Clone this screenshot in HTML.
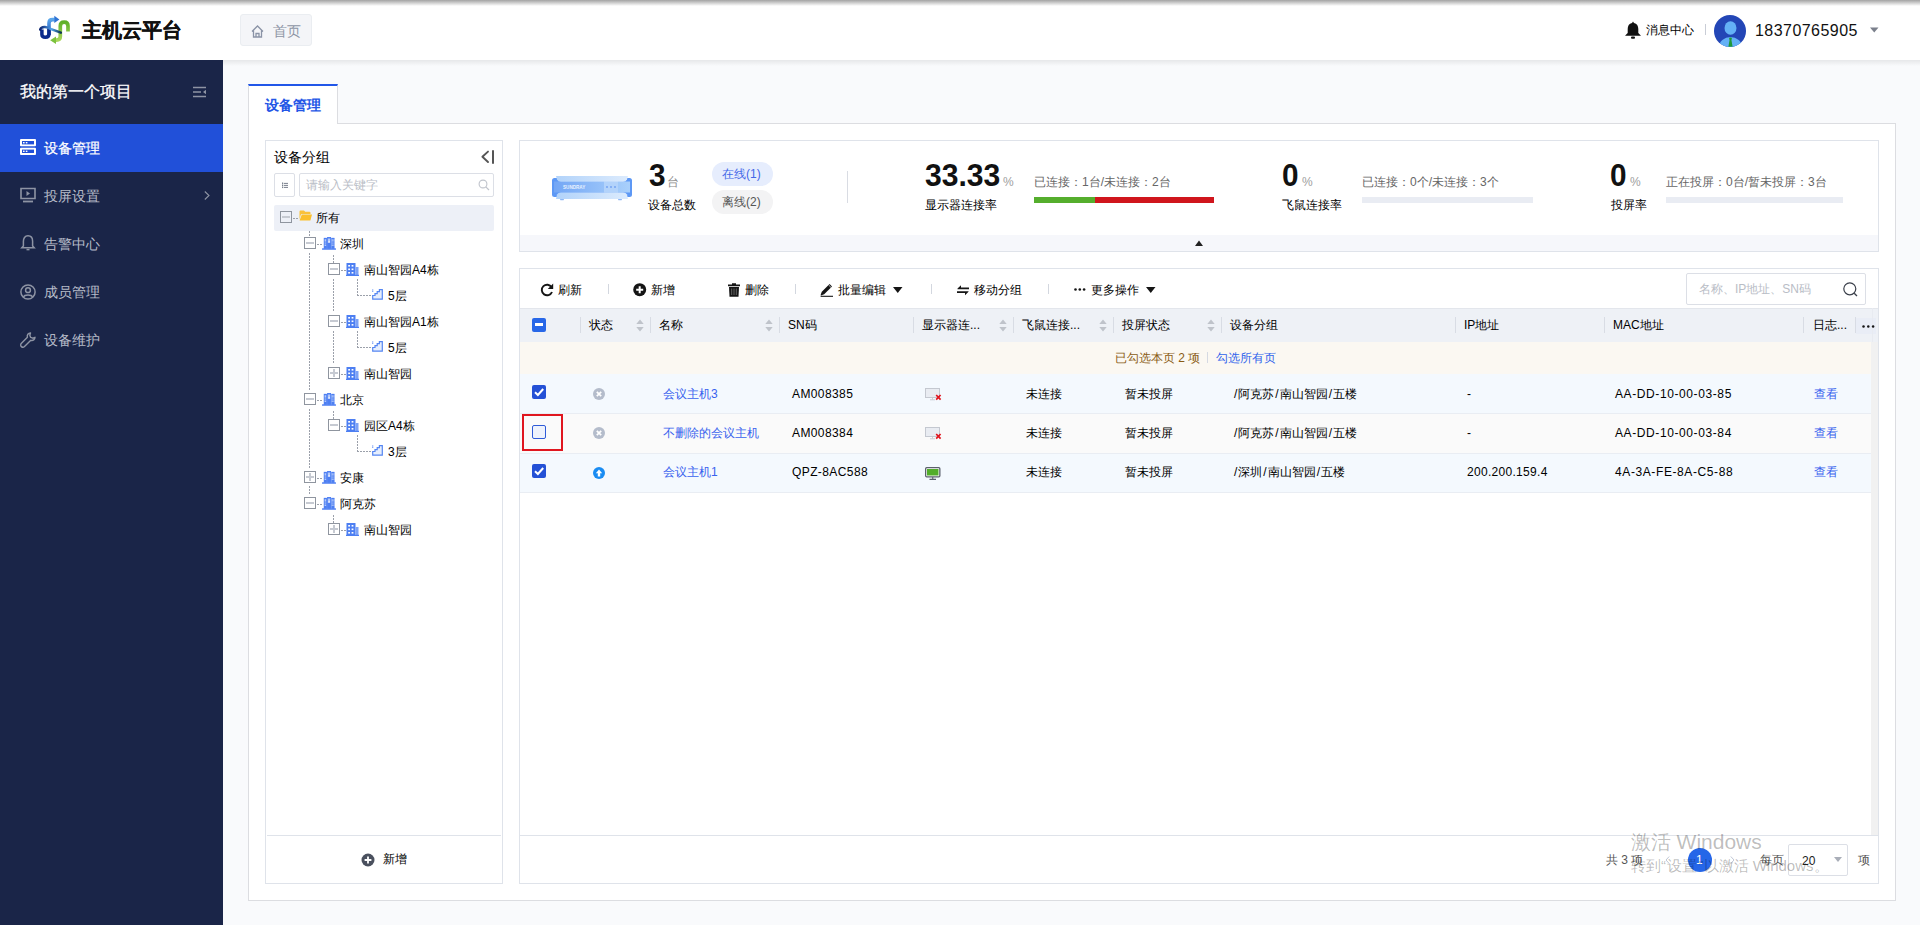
<!DOCTYPE html><html><head><meta charset="utf-8"><title>主机云平台</title><style>
*{margin:0;padding:0;box-sizing:border-box}
html,body{width:1920px;height:925px;overflow:hidden}
body{position:relative;background:#f9fafc;font-family:"Liberation Sans",sans-serif;color:#000}
.a{position:absolute}
.t{position:absolute;line-height:1;white-space:nowrap}
.f12{font-size:12px}.f14{font-size:14px}.f16{font-size:16px}
.g6{color:#666}
.lnk{color:#3d64e6}
svg{position:absolute;overflow:visible}
</style></head><body>
<div class="a" style="left:0px;top:0px;width:1920px;height:60px;background:#fff"></div>
<div class="a" style="left:0px;top:0px;width:1920px;height:6px;background:linear-gradient(#a3a3a3,rgba(255,255,255,0))"></div>
<div class="a" style="left:223px;top:60px;width:1697px;height:6px;background:linear-gradient(rgba(0,0,0,0.075),rgba(0,0,0,0))"></div>
<svg style="left:38px;top:14px" width="34" height="32" viewBox="0 0 34 32">
<defs><linearGradient id="lgb" x1="0" y1="1" x2="0" y2="0"><stop offset="0" stop-color="#1a4fb8"/><stop offset="1" stop-color="#5aa6ea"/></linearGradient>
<linearGradient id="lgg" x1="0" y1="0" x2="0" y2="1"><stop offset="0" stop-color="#5fb02a"/><stop offset="1" stop-color="#a9d65c"/></linearGradient>
<linearGradient id="lgd" x1="0" y1="0" x2="1" y2="0"><stop offset="0" stop-color="#0a2270"/><stop offset="0.55" stop-color="#4fa2ea"/><stop offset="1" stop-color="#0c3550"/></linearGradient></defs>
<path d="M30 17.6 V12 Q30 8.2 26.2 8.2 Q22.3 8.2 22.3 12 V22.5 Q22.3 26.1 18.5 26.1 H17.6" fill="none" stroke="url(#lgg)" stroke-width="3.7"/>
<path d="M18 22.4 L12.2 26.3 L18 30 Z" fill="#7cc23d"/>
<path d="M11 21 V9.2 Q11 5.6 14.6 5.6 H16.8" fill="none" stroke="url(#lgb)" stroke-width="3.6"/>
<path d="M16.3 1.8 L21.4 5.5 L16.3 9.1 Z" fill="#2f74d4"/>
<path d="M3.9 15.5 V20.5 Q3.9 23.2 7.4 23.2 Q11 23.2 11 20 V15" fill="none" stroke="#0c2b8c" stroke-width="3.5"/>
<path d="M2.2 15.6 Q3 12.8 7 13 Q10 13.2 12.5 15 L22.8 18.6" fill="none" stroke="url(#lgd)" stroke-width="2.5" stroke-linecap="round"/>
</svg>
<div class="t" style="left:82px;top:20px;font-size:20px;color:#111;font-weight:bold;-webkit-text-stroke:0.35px #111">主机云平台</div>
<div class="a" style="left:240px;top:14px;width:72px;height:32px;background:#f4f5f8;border:1px solid #eaedf1;border-radius:3px"></div>
<svg style="left:251px;top:25px" width="13" height="13" viewBox="0 0 13 13"><path d="M1 6.5 L6.5 1 L12 6.5 M2.5 5 V12 H10.5 V5 M5 12 V8.5 H8 V12" fill="none" stroke="#8a93a6" stroke-width="1.3"/></svg>
<div class="t" style="left:273px;top:24px;font-size:14px;color:#8c94a5;">首页</div>
<svg style="left:1625px;top:21px" width="16" height="18" viewBox="0 0 16 18"><path d="M8 0.5 L9 2 C12 2.6 13.3 5 13.3 8 L13.3 12 L16 14.8 L0 14.8 L2.7 12 L2.7 8 C2.7 5 4 2.6 7 2 Z" fill="#111"/><rect x="6" y="15.6" width="4" height="2.2" rx="1" fill="#111"/></svg>
<div class="t" style="left:1646px;top:24px;font-size:12px;color:#000;">消息中心</div>
<div class="a" style="left:1705px;top:24px;width:1px;height:11px;background:#c9cdd6"></div>
<svg style="left:1714px;top:15px" width="32" height="32" viewBox="0 0 32 32"><defs><clipPath id="avc"><circle cx="16" cy="16" r="16"/></clipPath></defs><circle cx="16" cy="16" r="16" fill="#2346b6"/><g clip-path="url(#avc)"><ellipse cx="16.5" cy="13" rx="6" ry="6.8" fill="#64b1f6"/><ellipse cx="16.5" cy="32" rx="11.5" ry="10" fill="#64b1f6"/><path d="M15.6 22.5 h1.8 l0.6 1.5 -0.6 0.8 1.2 7 h-4.2 l1.2 -7 -0.6 -0.8 z" fill="#1f9a3a"/></g></svg>
<div class="t" style="left:1755px;top:23px;font-size:16px;color:#111;letter-spacing:0.45px">18370765905</div>
<svg style="left:1870px;top:27px" width="9" height="6" viewBox="0 0 9 6"><path d="M0 0.5 H8.5 L4.25 5.5 Z" fill="#7b808c"/></svg>
<div class="a" style="left:0px;top:60px;width:223px;height:865px;background:#1a2548"></div>
<div class="t" style="left:20px;top:84px;font-size:16px;color:#fff;-webkit-text-stroke:0.25px #fff">我的第一个项目</div>
<svg style="left:193px;top:86px" width="14" height="12" viewBox="0 0 14 12"><path d="M0 1.5 H13 M0 6 H8 M0 10.5 H13" stroke="#8e94a4" stroke-width="1.5"/><path d="M13 3.8 L10 6 L13 8.2 Z" fill="#8e94a4"/></svg>
<div class="a" style="left:0px;top:124px;width:223px;height:48px;background:#2150d9"></div>
<div class="t" style="left:44px;top:141px;font-size:14px;color:#fff;-webkit-text-stroke:0.25px #fff">设备管理</div>
<div class="t" style="left:44px;top:189px;font-size:14px;color:#b7bcc8;">投屏设置</div>
<div class="t" style="left:44px;top:237px;font-size:14px;color:#b7bcc8;">告警中心</div>
<div class="t" style="left:44px;top:285px;font-size:14px;color:#b7bcc8;">成员管理</div>
<div class="t" style="left:44px;top:333px;font-size:14px;color:#b7bcc8;">设备维护</div>
<svg style="left:20px;top:139px" width="16" height="16" viewBox="0 0 16 16"><rect x="0" y="0" width="16" height="7.2" rx="1" fill="#fff"/><rect x="0" y="8.8" width="16" height="7.2" rx="1" fill="#fff"/><rect x="2" y="2" width="12" height="3.4" fill="#2150d9"/><rect x="2" y="10.6" width="12" height="3.4" fill="#2150d9"/><rect x="3" y="3" width="1.6" height="1.4" fill="#fff"/><rect x="5.8" y="3" width="1.6" height="1.4" fill="#fff"/><rect x="3" y="11.6" width="1.6" height="1.4" fill="#fff"/><rect x="5.8" y="11.6" width="1.6" height="1.4" fill="#fff"/></svg>
<svg style="left:20px;top:187px" width="16" height="16" viewBox="0 0 16 16"><path d="M1 1.5 L15 1.5 L15 11.5 L1 11.5 Z" fill="none" stroke="#8e94a4" stroke-width="1.6"/><path d="M6.5 4 L10 6.5 L6.5 9 Z" fill="#8e94a4"/><rect x="3" y="13.6" width="10" height="1.8" fill="#8e94a4"/></svg>
<svg style="left:204px;top:191px" width="6" height="9" viewBox="0 0 6 9"><path d="M0.8 0.5 L5 4.5 L0.8 8.5" fill="none" stroke="#8e94a4" stroke-width="1.1"/></svg>
<svg style="left:21px;top:235px" width="14" height="16" viewBox="0 0 14 16"><path d="M7 0.8 C10.2 0.8 11.6 3.4 11.6 6.2 L11.6 11 L13.2 12.8 L0.8 12.8 L2.4 11 L2.4 6.2 C2.4 3.4 3.8 0.8 7 0.8 Z" fill="none" stroke="#8e94a4" stroke-width="1.5"/><path d="M5.5 14.6 H8.5" stroke="#8e94a4" stroke-width="1.5"/></svg>
<svg style="left:20px;top:284px" width="16" height="16" viewBox="0 0 16 16"><circle cx="8" cy="8" r="7.1" fill="none" stroke="#8e94a4" stroke-width="1.5"/><circle cx="8" cy="6.2" r="2.4" fill="none" stroke="#8e94a4" stroke-width="1.5"/><path d="M3.4 13 C4.5 10.3 11.5 10.3 12.6 13" fill="none" stroke="#8e94a4" stroke-width="1.5"/></svg>
<svg style="left:20px;top:332px" width="16" height="16" viewBox="0 0 16 16"><path d="M10.5 1 C8.2 1 6.8 3 7.4 5.2 L1.2 11.4 C0.4 12.2 0.6 14 1.4 14.6 C2.2 15.3 3.7 15.3 4.5 14.5 L10.8 8.3 C13 9 15 7.4 15 5.3 L12.8 6.2 L10.6 5.3 L9.8 3.3 Z" fill="none" stroke="#8e94a4" stroke-width="1.4" stroke-linejoin="round"/></svg>
<div class="a" style="left:248px;top:123px;width:1648px;height:778px;background:#fff;border:1px solid #dcdde1"></div>
<div class="a" style="left:248px;top:84px;width:90px;height:40px;background:#fff;border:1px solid #dcdde1;border-bottom:none;border-top:2px solid #2156e8"></div>
<div class="t" style="left:265px;top:98px;font-size:14px;color:#2356e6;font-weight:bold">设备管理</div>
<div class="a" style="left:265px;top:140px;width:238px;height:744px;background:#fff;border:1px solid #dfe3ea"></div>
<div class="t" style="left:274px;top:150px;font-size:14px;color:#000;">设备分组</div>
<svg style="left:480px;top:150px" width="15" height="14" viewBox="0 0 15 14"><path d="M8 1.6 L2.4 6.8 L8 12" fill="none" stroke="#555" stroke-width="1.9" stroke-linecap="round" stroke-linejoin="round"/><path d="M13 1 V13" stroke="#555" stroke-width="2" stroke-linecap="round"/></svg>
<div class="a" style="left:274px;top:173px;width:21px;height:24px;background:#fff;border:1px solid #dcdfe6;border-radius:2px"></div>
<svg style="left:282px;top:182px" width="7" height="7" viewBox="0 0 7 7"><rect x="0" y="0.8" width="1.2" height="1.2" fill="#5d6371"/><rect x="0" y="2.8" width="1.2" height="1.2" fill="#5d6371"/><rect x="0" y="4.8" width="1.2" height="1.2" fill="#5d6371"/><path d="M0.6 0 V6.2" stroke="#9aa0ab" stroke-width="0.6"/><path d="M2 1.4 H6 M2 3.4 H6 M2 5.4 H6" stroke="#6b7180" stroke-width="0.9"/></svg>
<div class="a" style="left:299px;top:173px;width:195px;height:24px;background:#fff;border:1px solid #dcdfe6;border-radius:2px"></div>
<div class="t" style="left:306px;top:179px;font-size:12px;color:#b9bdc6;">请输入关键字</div>
<svg style="left:478px;top:179px" width="12" height="12" viewBox="0 0 12 12"><circle cx="5" cy="5" r="3.9" fill="none" stroke="#c0c4cc" stroke-width="1.1"/><path d="M7.8 7.8 L11 11" stroke="#c0c4cc" stroke-width="1.2"/></svg>
<div class="a" style="left:274px;top:205px;width:220px;height:26px;background:#edf0f7;border-radius:2px"></div>
<div class="a" style="left:309px;top:231px;width:1px;height:6px;background:repeating-linear-gradient(to bottom,#9ba0aa 0 2px,transparent 2px 3px)"></div>
<div class="a" style="left:309px;top:253px;width:1px;height:137px;background:repeating-linear-gradient(to bottom,#9ba0aa 0 2px,transparent 2px 3px)"></div>
<div class="a" style="left:309px;top:409px;width:1px;height:59px;background:repeating-linear-gradient(to bottom,#9ba0aa 0 2px,transparent 2px 3px)"></div>
<div class="a" style="left:309px;top:486px;width:1px;height:9px;background:repeating-linear-gradient(to bottom,#9ba0aa 0 2px,transparent 2px 3px)"></div>
<div class="a" style="left:333px;top:255px;width:1px;height:8px;background:repeating-linear-gradient(to bottom,#9ba0aa 0 2px,transparent 2px 3px)"></div>
<div class="a" style="left:333px;top:279px;width:1px;height:33px;background:repeating-linear-gradient(to bottom,#9ba0aa 0 2px,transparent 2px 3px)"></div>
<div class="a" style="left:333px;top:331px;width:1px;height:33px;background:repeating-linear-gradient(to bottom,#9ba0aa 0 2px,transparent 2px 3px)"></div>
<div class="a" style="left:333px;top:411px;width:1px;height:8px;background:repeating-linear-gradient(to bottom,#9ba0aa 0 2px,transparent 2px 3px)"></div>
<div class="a" style="left:333px;top:515px;width:1px;height:8px;background:repeating-linear-gradient(to bottom,#9ba0aa 0 2px,transparent 2px 3px)"></div>
<div class="a" style="left:280px;top:211px;width:12px;height:12px;border:1px solid #8f959f;background:transparent"></div>
<div class="a" style="left:282px;top:216px;width:8px;height:2px;background:#c6cad2"></div>
<div class="a" style="left:293px;top:218px;width:5px;height:1px;background:repeating-linear-gradient(to right,#9ba0aa 0 2px,transparent 2px 3px)"></div>
<svg style="left:299px;top:210px" width="13" height="11" viewBox="0 0 13 11"><path d="M0.5 1.5 Q0.5 0.5 1.5 0.5 H5 L6.2 1.8 H10.5 Q11.5 1.8 11.5 2.8 V4 H3 Q2 4 1.7 5 L0.5 9.5 Z" fill="#f9c13b"/><path d="M2.8 4.6 H13 L11.4 10.6 H0.6 Z" fill="#fbbf2d"/></svg>
<div class="t" style="left:316px;top:212px;font-size:12px;color:#000;">所有</div>
<div class="a" style="left:304px;top:237px;width:12px;height:12px;border:1px solid #8f959f;background:transparent"></div>
<div class="a" style="left:306px;top:242px;width:8px;height:2px;background:#c6cad2"></div>
<div class="a" style="left:317px;top:244px;width:5px;height:1px;background:repeating-linear-gradient(to right,#9ba0aa 0 2px,transparent 2px 3px)"></div>
<svg style="left:322px;top:237px" width="14" height="13" viewBox="0 0 14 13"><g fill="#b9cdfa" stroke="#4d7ff2" stroke-width="0.9"><rect x="2.2" y="1.3" width="2.2" height="10"/><rect x="5.6" y="0.5" width="3" height="10.8"/><rect x="9.8" y="1.3" width="2.2" height="10"/></g><g fill="#4d7ff2"><rect x="2" y="1" width="2.6" height="1.2"/><rect x="9.6" y="1" width="2.6" height="1.2"/><rect x="5.4" y="0.3" width="3.4" height="1.2"/><rect x="2" y="4.6" width="2.6" height="0.9"/><rect x="9.6" y="4.6" width="2.6" height="0.9"/><rect x="2" y="6.6" width="2.6" height="0.9"/><rect x="9.6" y="6.6" width="2.6" height="0.9"/><rect x="2" y="9" width="2.6" height="2.4"/><rect x="9.6" y="9" width="2.6" height="2.4"/><rect x="5.4" y="6" width="3.4" height="5.4"/></g><rect x="6.3" y="4.4" width="1.6" height="0.8" fill="#fff"/><rect x="0" y="11.2" width="14" height="1.6" rx="0.5" fill="#4d7ff2"/></svg>
<div class="t" style="left:340px;top:238px;font-size:12px;color:#000;">深圳</div>
<div class="a" style="left:328px;top:263px;width:12px;height:12px;border:1px solid #8f959f;background:transparent"></div>
<div class="a" style="left:330px;top:268px;width:8px;height:2px;background:#c6cad2"></div>
<div class="a" style="left:341px;top:270px;width:5px;height:1px;background:repeating-linear-gradient(to right,#9ba0aa 0 2px,transparent 2px 3px)"></div>
<svg style="left:346px;top:263px" width="13" height="13" viewBox="0 0 13 13"><rect x="0.5" y="0" width="9" height="12" fill="#4d7ff2"/><rect x="9.5" y="4" width="3" height="8" fill="#7da2f5"/><g fill="#fff"><rect x="2.2" y="2" width="1.8" height="1.6"/><rect x="5.6" y="2" width="1.8" height="1.6"/><rect x="2.2" y="5.5" width="1.8" height="1.6"/><rect x="5.6" y="5.5" width="1.8" height="1.6"/><rect x="2.2" y="9" width="1.8" height="1.6"/><rect x="5.6" y="9" width="1.8" height="1.6"/></g><rect x="0" y="11.8" width="13" height="1.2" fill="#4d7ff2"/></svg>
<div class="t" style="left:364px;top:264px;font-size:12px;color:#000;">南山智园A4栋</div>
<div class="a" style="left:357px;top:279px;width:1px;height:16px;background:repeating-linear-gradient(to bottom,#9ba0aa 0 2px,transparent 2px 3px)"></div>
<div class="a" style="left:357px;top:295px;width:14px;height:1px;background:repeating-linear-gradient(to right,#9ba0aa 0 2px,transparent 2px 3px)"></div>
<svg style="left:372px;top:289px" width="11" height="11" viewBox="0 0 11 11"><path d="M0.7 10.2 V6.5 H3 V4.6 H5.2 V2.6 H7.4 V0.7 H10.3 V10.2 Z" fill="#e6eefd" stroke="#5586f2" stroke-width="1.2"/><path d="M0.7 0.5 V3" stroke="#5586f2" stroke-width="1.2" stroke-dasharray="1 0.8"/></svg>
<div class="t" style="left:388px;top:290px;font-size:12px;color:#000;">5层</div>
<div class="a" style="left:328px;top:315px;width:12px;height:12px;border:1px solid #8f959f;background:transparent"></div>
<div class="a" style="left:330px;top:320px;width:8px;height:2px;background:#c6cad2"></div>
<div class="a" style="left:341px;top:322px;width:5px;height:1px;background:repeating-linear-gradient(to right,#9ba0aa 0 2px,transparent 2px 3px)"></div>
<svg style="left:346px;top:315px" width="13" height="13" viewBox="0 0 13 13"><rect x="0.5" y="0" width="9" height="12" fill="#4d7ff2"/><rect x="9.5" y="4" width="3" height="8" fill="#7da2f5"/><g fill="#fff"><rect x="2.2" y="2" width="1.8" height="1.6"/><rect x="5.6" y="2" width="1.8" height="1.6"/><rect x="2.2" y="5.5" width="1.8" height="1.6"/><rect x="5.6" y="5.5" width="1.8" height="1.6"/><rect x="2.2" y="9" width="1.8" height="1.6"/><rect x="5.6" y="9" width="1.8" height="1.6"/></g><rect x="0" y="11.8" width="13" height="1.2" fill="#4d7ff2"/></svg>
<div class="t" style="left:364px;top:316px;font-size:12px;color:#000;">南山智园A1栋</div>
<div class="a" style="left:357px;top:331px;width:1px;height:16px;background:repeating-linear-gradient(to bottom,#9ba0aa 0 2px,transparent 2px 3px)"></div>
<div class="a" style="left:357px;top:347px;width:14px;height:1px;background:repeating-linear-gradient(to right,#9ba0aa 0 2px,transparent 2px 3px)"></div>
<svg style="left:372px;top:341px" width="11" height="11" viewBox="0 0 11 11"><path d="M0.7 10.2 V6.5 H3 V4.6 H5.2 V2.6 H7.4 V0.7 H10.3 V10.2 Z" fill="#e6eefd" stroke="#5586f2" stroke-width="1.2"/><path d="M0.7 0.5 V3" stroke="#5586f2" stroke-width="1.2" stroke-dasharray="1 0.8"/></svg>
<div class="t" style="left:388px;top:342px;font-size:12px;color:#000;">5层</div>
<div class="a" style="left:328px;top:367px;width:12px;height:12px;border:1px solid #8f959f;background:transparent"></div>
<div class="a" style="left:330px;top:372px;width:8px;height:2px;background:#c6cad2"></div>
<div class="a" style="left:333px;top:369px;width:2px;height:8px;background:#c6cad2"></div>
<div class="a" style="left:341px;top:374px;width:5px;height:1px;background:repeating-linear-gradient(to right,#9ba0aa 0 2px,transparent 2px 3px)"></div>
<svg style="left:346px;top:367px" width="13" height="13" viewBox="0 0 13 13"><rect x="0.5" y="0" width="9" height="12" fill="#4d7ff2"/><rect x="9.5" y="4" width="3" height="8" fill="#7da2f5"/><g fill="#fff"><rect x="2.2" y="2" width="1.8" height="1.6"/><rect x="5.6" y="2" width="1.8" height="1.6"/><rect x="2.2" y="5.5" width="1.8" height="1.6"/><rect x="5.6" y="5.5" width="1.8" height="1.6"/><rect x="2.2" y="9" width="1.8" height="1.6"/><rect x="5.6" y="9" width="1.8" height="1.6"/></g><rect x="0" y="11.8" width="13" height="1.2" fill="#4d7ff2"/></svg>
<div class="t" style="left:364px;top:368px;font-size:12px;color:#000;">南山智园</div>
<div class="a" style="left:304px;top:393px;width:12px;height:12px;border:1px solid #8f959f;background:transparent"></div>
<div class="a" style="left:306px;top:398px;width:8px;height:2px;background:#c6cad2"></div>
<div class="a" style="left:317px;top:400px;width:5px;height:1px;background:repeating-linear-gradient(to right,#9ba0aa 0 2px,transparent 2px 3px)"></div>
<svg style="left:322px;top:393px" width="14" height="13" viewBox="0 0 14 13"><g fill="#b9cdfa" stroke="#4d7ff2" stroke-width="0.9"><rect x="2.2" y="1.3" width="2.2" height="10"/><rect x="5.6" y="0.5" width="3" height="10.8"/><rect x="9.8" y="1.3" width="2.2" height="10"/></g><g fill="#4d7ff2"><rect x="2" y="1" width="2.6" height="1.2"/><rect x="9.6" y="1" width="2.6" height="1.2"/><rect x="5.4" y="0.3" width="3.4" height="1.2"/><rect x="2" y="4.6" width="2.6" height="0.9"/><rect x="9.6" y="4.6" width="2.6" height="0.9"/><rect x="2" y="6.6" width="2.6" height="0.9"/><rect x="9.6" y="6.6" width="2.6" height="0.9"/><rect x="2" y="9" width="2.6" height="2.4"/><rect x="9.6" y="9" width="2.6" height="2.4"/><rect x="5.4" y="6" width="3.4" height="5.4"/></g><rect x="6.3" y="4.4" width="1.6" height="0.8" fill="#fff"/><rect x="0" y="11.2" width="14" height="1.6" rx="0.5" fill="#4d7ff2"/></svg>
<div class="t" style="left:340px;top:394px;font-size:12px;color:#000;">北京</div>
<div class="a" style="left:328px;top:419px;width:12px;height:12px;border:1px solid #8f959f;background:transparent"></div>
<div class="a" style="left:330px;top:424px;width:8px;height:2px;background:#c6cad2"></div>
<div class="a" style="left:341px;top:426px;width:5px;height:1px;background:repeating-linear-gradient(to right,#9ba0aa 0 2px,transparent 2px 3px)"></div>
<svg style="left:346px;top:419px" width="13" height="13" viewBox="0 0 13 13"><rect x="0.5" y="0" width="9" height="12" fill="#4d7ff2"/><rect x="9.5" y="4" width="3" height="8" fill="#7da2f5"/><g fill="#fff"><rect x="2.2" y="2" width="1.8" height="1.6"/><rect x="5.6" y="2" width="1.8" height="1.6"/><rect x="2.2" y="5.5" width="1.8" height="1.6"/><rect x="5.6" y="5.5" width="1.8" height="1.6"/><rect x="2.2" y="9" width="1.8" height="1.6"/><rect x="5.6" y="9" width="1.8" height="1.6"/></g><rect x="0" y="11.8" width="13" height="1.2" fill="#4d7ff2"/></svg>
<div class="t" style="left:364px;top:420px;font-size:12px;color:#000;">园区A4栋</div>
<div class="a" style="left:357px;top:435px;width:1px;height:16px;background:repeating-linear-gradient(to bottom,#9ba0aa 0 2px,transparent 2px 3px)"></div>
<div class="a" style="left:357px;top:451px;width:14px;height:1px;background:repeating-linear-gradient(to right,#9ba0aa 0 2px,transparent 2px 3px)"></div>
<svg style="left:372px;top:445px" width="11" height="11" viewBox="0 0 11 11"><path d="M0.7 10.2 V6.5 H3 V4.6 H5.2 V2.6 H7.4 V0.7 H10.3 V10.2 Z" fill="#e6eefd" stroke="#5586f2" stroke-width="1.2"/><path d="M0.7 0.5 V3" stroke="#5586f2" stroke-width="1.2" stroke-dasharray="1 0.8"/></svg>
<div class="t" style="left:388px;top:446px;font-size:12px;color:#000;">3层</div>
<div class="a" style="left:304px;top:471px;width:12px;height:12px;border:1px solid #8f959f;background:transparent"></div>
<div class="a" style="left:306px;top:476px;width:8px;height:2px;background:#c6cad2"></div>
<div class="a" style="left:309px;top:473px;width:2px;height:8px;background:#c6cad2"></div>
<div class="a" style="left:317px;top:478px;width:5px;height:1px;background:repeating-linear-gradient(to right,#9ba0aa 0 2px,transparent 2px 3px)"></div>
<svg style="left:322px;top:471px" width="14" height="13" viewBox="0 0 14 13"><g fill="#b9cdfa" stroke="#4d7ff2" stroke-width="0.9"><rect x="2.2" y="1.3" width="2.2" height="10"/><rect x="5.6" y="0.5" width="3" height="10.8"/><rect x="9.8" y="1.3" width="2.2" height="10"/></g><g fill="#4d7ff2"><rect x="2" y="1" width="2.6" height="1.2"/><rect x="9.6" y="1" width="2.6" height="1.2"/><rect x="5.4" y="0.3" width="3.4" height="1.2"/><rect x="2" y="4.6" width="2.6" height="0.9"/><rect x="9.6" y="4.6" width="2.6" height="0.9"/><rect x="2" y="6.6" width="2.6" height="0.9"/><rect x="9.6" y="6.6" width="2.6" height="0.9"/><rect x="2" y="9" width="2.6" height="2.4"/><rect x="9.6" y="9" width="2.6" height="2.4"/><rect x="5.4" y="6" width="3.4" height="5.4"/></g><rect x="6.3" y="4.4" width="1.6" height="0.8" fill="#fff"/><rect x="0" y="11.2" width="14" height="1.6" rx="0.5" fill="#4d7ff2"/></svg>
<div class="t" style="left:340px;top:472px;font-size:12px;color:#000;">安康</div>
<div class="a" style="left:304px;top:497px;width:12px;height:12px;border:1px solid #8f959f;background:transparent"></div>
<div class="a" style="left:306px;top:502px;width:8px;height:2px;background:#c6cad2"></div>
<div class="a" style="left:317px;top:504px;width:5px;height:1px;background:repeating-linear-gradient(to right,#9ba0aa 0 2px,transparent 2px 3px)"></div>
<svg style="left:322px;top:497px" width="14" height="13" viewBox="0 0 14 13"><g fill="#b9cdfa" stroke="#4d7ff2" stroke-width="0.9"><rect x="2.2" y="1.3" width="2.2" height="10"/><rect x="5.6" y="0.5" width="3" height="10.8"/><rect x="9.8" y="1.3" width="2.2" height="10"/></g><g fill="#4d7ff2"><rect x="2" y="1" width="2.6" height="1.2"/><rect x="9.6" y="1" width="2.6" height="1.2"/><rect x="5.4" y="0.3" width="3.4" height="1.2"/><rect x="2" y="4.6" width="2.6" height="0.9"/><rect x="9.6" y="4.6" width="2.6" height="0.9"/><rect x="2" y="6.6" width="2.6" height="0.9"/><rect x="9.6" y="6.6" width="2.6" height="0.9"/><rect x="2" y="9" width="2.6" height="2.4"/><rect x="9.6" y="9" width="2.6" height="2.4"/><rect x="5.4" y="6" width="3.4" height="5.4"/></g><rect x="6.3" y="4.4" width="1.6" height="0.8" fill="#fff"/><rect x="0" y="11.2" width="14" height="1.6" rx="0.5" fill="#4d7ff2"/></svg>
<div class="t" style="left:340px;top:498px;font-size:12px;color:#000;">阿克苏</div>
<div class="a" style="left:328px;top:523px;width:12px;height:12px;border:1px solid #8f959f;background:transparent"></div>
<div class="a" style="left:330px;top:528px;width:8px;height:2px;background:#c6cad2"></div>
<div class="a" style="left:333px;top:525px;width:2px;height:8px;background:#c6cad2"></div>
<div class="a" style="left:341px;top:530px;width:5px;height:1px;background:repeating-linear-gradient(to right,#9ba0aa 0 2px,transparent 2px 3px)"></div>
<svg style="left:346px;top:523px" width="13" height="13" viewBox="0 0 13 13"><rect x="0.5" y="0" width="9" height="12" fill="#4d7ff2"/><rect x="9.5" y="4" width="3" height="8" fill="#7da2f5"/><g fill="#fff"><rect x="2.2" y="2" width="1.8" height="1.6"/><rect x="5.6" y="2" width="1.8" height="1.6"/><rect x="2.2" y="5.5" width="1.8" height="1.6"/><rect x="5.6" y="5.5" width="1.8" height="1.6"/><rect x="2.2" y="9" width="1.8" height="1.6"/><rect x="5.6" y="9" width="1.8" height="1.6"/></g><rect x="0" y="11.8" width="13" height="1.2" fill="#4d7ff2"/></svg>
<div class="t" style="left:364px;top:524px;font-size:12px;color:#000;">南山智园</div>
<div class="a" style="left:267px;top:835px;width:234px;height:1px;background:#dfe3ea"></div>
<svg style="left:361px;top:853px" width="14" height="14" viewBox="0 0 14 14"><circle cx="7" cy="7" r="6.5" fill="#4a505e"/><path d="M7 3.6 V10.4 M3.6 7 H10.4" stroke="#fff" stroke-width="1.8"/></svg>
<div class="t" style="left:383px;top:853px;font-size:12px;color:#000;">新增</div>
<div class="a" style="left:519px;top:140px;width:1360px;height:112px;background:#fff;border:1px solid #dfe3ea"></div>
<div class="a" style="left:520px;top:235px;width:1358px;height:16px;background:#f6f7fb"></div>
<svg style="left:1195px;top:240px" width="8" height="6" viewBox="0 0 8 6"><path d="M0 6 L4 0.5 L8 6 Z" fill="#222"/></svg>
<svg style="left:552px;top:176px" width="80" height="25" viewBox="0 0 80 25">
<defs><linearGradient id="dv1" x1="0" x2="1"><stop offset="0" stop-color="#b2d3fa"/><stop offset="1" stop-color="#dcebfd"/></linearGradient>
<linearGradient id="dv2" x1="0" x2="1"><stop offset="0" stop-color="#73a6f5"/><stop offset="1" stop-color="#a9d0fb"/></linearGradient></defs>
<rect x="0" y="2" width="80" height="19" rx="2.5" fill="#5d98f5"/>
<rect x="2" y="5.5" width="76" height="11" fill="url(#dv2)"/>
<rect x="52" y="5.5" width="14" height="11" fill="#b3d3fb"/>
<circle cx="55" cy="11" r="0.9" fill="#6f9ff2"/><circle cx="59" cy="11" r="0.9" fill="#6f9ff2"/><circle cx="63" cy="11" r="0.9" fill="#6f9ff2"/>
<text x="11" y="13" font-size="4.6" fill="#e8f1fe" font-family="Liberation Sans" font-weight="bold">SUNDRAY</text>
<path d="M4 0 H76 L75 3.5 Q74 5.7 71 5.7 H9 Q6 5.7 5 3.5 Z" fill="url(#dv1)"/>
<path d="M9 16.5 H71 Q74 16.5 75 18.5 L76 23 H4 L5 18.5 Q6 16.5 9 16.5 Z" fill="url(#dv1)"/>
<rect x="8" y="23" width="4" height="1.2" rx="0.6" fill="#8fb8f6"/><rect x="66" y="23" width="4" height="1.2" rx="0.6" fill="#8fb8f6"/>
</svg>
<div class="t" style="left:649px;top:159px;font-size:32px;color:#111;font-weight:bold;transform:scaleX(0.93);transform-origin:0 0">3</div>
<div class="t" style="left:667px;top:176px;font-size:12px;color:#8a8a8a;">台</div>
<div class="t" style="left:648px;top:199px;font-size:12px;color:#000;">设备总数</div>
<div class="a" style="left:712px;top:162px;width:61px;height:24px;background:#e6edfd;border-radius:12px"></div>
<div class="t" style="left:722px;top:168px;font-size:12px;color:#4468e8;">在线(1)</div>
<div class="a" style="left:712px;top:190px;width:61px;height:24px;background:#f3f3f4;border-radius:12px"></div>
<div class="t" style="left:722px;top:196px;font-size:12px;color:#555;">离线(2)</div>
<div class="a" style="left:847px;top:171px;width:1px;height:32px;background:#d9dce3"></div>
<div class="t" style="left:925px;top:159px;font-size:32px;color:#111;font-weight:bold;transform:scaleX(0.94);transform-origin:0 0">33.33</div>
<div class="t" style="left:1003px;top:176px;font-size:12px;color:#a0a0a0;">%</div>
<div class="t" style="left:925px;top:199px;font-size:12px;color:#000;">显示器连接率</div>
<div class="t" style="left:1034px;top:176px;font-size:12px;color:#666;">已连接：1台/未连接：2台</div>
<div class="a" style="left:1034px;top:197px;width:61px;height:6px;background:#55ae2d"></div>
<div class="a" style="left:1095px;top:197px;width:119px;height:6px;background:#d0161d"></div>
<div class="t" style="left:1282px;top:159px;font-size:32px;color:#111;font-weight:bold;transform:scaleX(0.93);transform-origin:0 0">0</div>
<div class="t" style="left:1302px;top:176px;font-size:12px;color:#a0a0a0;">%</div>
<div class="t" style="left:1282px;top:199px;font-size:12px;color:#000;">飞鼠连接率</div>
<div class="t" style="left:1362px;top:176px;font-size:12px;color:#666;">已连接：0个/未连接：3个</div>
<div class="a" style="left:1362px;top:197px;width:171px;height:6px;background:#e9ecf3"></div>
<div class="t" style="left:1610px;top:159px;font-size:32px;color:#111;font-weight:bold;transform:scaleX(0.93);transform-origin:0 0">0</div>
<div class="t" style="left:1630px;top:176px;font-size:12px;color:#a0a0a0;">%</div>
<div class="t" style="left:1611px;top:199px;font-size:12px;color:#000;">投屏率</div>
<div class="t" style="left:1666px;top:176px;font-size:12px;color:#666;">正在投屏：0台/暂未投屏：3台</div>
<div class="a" style="left:1666px;top:197px;width:177px;height:6px;background:#e9ecf3"></div>
<div class="a" style="left:519px;top:268px;width:1360px;height:616px;background:#fff;border:1px solid #dfe3ea"></div>
<svg style="left:540px;top:283px" width="14" height="14" viewBox="0 0 14 14"><path d="M11.6 4.2 A5.3 5.3 0 1 0 12 9" fill="none" stroke="#151515" stroke-width="1.9"/><path d="M13.2 0.6 L13.2 6 L7.8 6 Z" fill="#151515"/></svg>
<div class="t" style="left:558px;top:284px;font-size:12px;color:#000;">刷新</div>
<div class="a" style="left:608px;top:284px;width:1px;height:10px;background:#d3d7df"></div>
<svg style="left:633px;top:283px" width="14" height="14" viewBox="0 0 14 14"><circle cx="6.7" cy="6.7" r="6.5" fill="#151515"/><path d="M6.7 3.2 V10.2 M3.2 6.7 H10.2" stroke="#fff" stroke-width="2"/></svg>
<div class="t" style="left:651px;top:284px;font-size:12px;color:#000;">新增</div>
<svg style="left:728px;top:283px" width="13" height="14" viewBox="0 0 13 14"><path d="M4 0.3 H8 V1.6 H12 V3.3 H0 V1.6 H4 Z" fill="#151515"/><path d="M1 4 H11 L10.5 13.7 H1.5 Z" fill="#151515"/><path d="M3.7 5.5 V12 M6 5.5 V12 M8.3 5.5 V12" stroke="#777" stroke-width="0.8"/></svg>
<div class="t" style="left:745px;top:284px;font-size:12px;color:#000;">删除</div>
<div class="a" style="left:795px;top:284px;width:1px;height:10px;background:#d3d7df"></div>
<svg style="left:820px;top:283px" width="14" height="14" viewBox="0 0 14 14"><path d="M9.6 1 L12 3.4 L4.2 11.2 L1 12.4 L0.6 12 L1.8 8.8 Z" fill="#151515"/><path d="M8.6 2 L11 4.4" stroke="#fff" stroke-width="0.7"/><path d="M0.6 13.3 H13" stroke="#151515" stroke-width="1.1"/></svg>
<div class="t" style="left:838px;top:284px;font-size:12px;color:#000;">批量编辑</div>
<svg style="left:893px;top:287px" width="10" height="6" viewBox="0 0 10 6"><path d="M0 0 H9.5 L4.75 6 Z" fill="#151515"/></svg>
<div class="a" style="left:931px;top:284px;width:1px;height:10px;background:#d3d7df"></div>
<svg style="left:957px;top:285px" width="12" height="11" viewBox="0 0 12 11"><path d="M0.5 3.5 L4 0.3 V2.6 H12 V4.3 H0.5 Z" fill="#151515"/><path d="M11.5 6.8 L8 10.2 V7.9 H0 V6.2 H11.5 Z" fill="#151515"/></svg>
<div class="t" style="left:974px;top:284px;font-size:12px;color:#000;">移动分组</div>
<div class="a" style="left:1048px;top:284px;width:1px;height:10px;background:#d3d7df"></div>
<svg style="left:1074px;top:288px" width="12" height="3" viewBox="0 0 12 3"><circle cx="1.5" cy="1.5" r="1.3" fill="#151515"/><circle cx="5.8" cy="1.5" r="1.3" fill="#151515"/><circle cx="10.1" cy="1.5" r="1.3" fill="#151515"/></svg>
<div class="t" style="left:1091px;top:284px;font-size:12px;color:#000;">更多操作</div>
<svg style="left:1146px;top:287px" width="10" height="6" viewBox="0 0 10 6"><path d="M0 0 H9.5 L4.75 6 Z" fill="#151515"/></svg>
<div class="a" style="left:1686px;top:273px;width:180px;height:32px;background:#fff;border:1px solid #dcdfe6;border-radius:2px"></div>
<div class="t" style="left:1699px;top:283px;font-size:12px;color:#b9bdc6;">名称、IP地址、SN码</div>
<svg style="left:1843px;top:282px" width="15" height="15" viewBox="0 0 15 15"><circle cx="6.8" cy="6.8" r="6" fill="none" stroke="#3a3f4a" stroke-width="1.2"/><path d="M11.2 11.2 L14 14" stroke="#3a3f4a" stroke-width="1.3"/></svg>
<div class="a" style="left:520px;top:308px;width:1358px;height:34px;background:#eef1f6;border-top:1px solid #e3e6ec"></div>
<div class="a" style="left:532px;top:318px;width:14px;height:14px;background:#2767e8;border-radius:2px"></div>
<div class="a" style="left:535px;top:323px;width:8px;height:3px;background:#fff"></div>
<div class="a" style="left:580px;top:317px;width:1px;height:16px;background:#d8dce4"></div>
<div class="a" style="left:650px;top:317px;width:1px;height:16px;background:#d8dce4"></div>
<div class="a" style="left:779px;top:317px;width:1px;height:16px;background:#d8dce4"></div>
<div class="a" style="left:913px;top:317px;width:1px;height:16px;background:#d8dce4"></div>
<div class="a" style="left:1013px;top:317px;width:1px;height:16px;background:#d8dce4"></div>
<div class="a" style="left:1113px;top:317px;width:1px;height:16px;background:#d8dce4"></div>
<div class="a" style="left:1221px;top:317px;width:1px;height:16px;background:#d8dce4"></div>
<div class="a" style="left:1455px;top:317px;width:1px;height:16px;background:#d8dce4"></div>
<div class="a" style="left:1604px;top:317px;width:1px;height:16px;background:#d8dce4"></div>
<div class="a" style="left:1803px;top:317px;width:1px;height:16px;background:#d8dce4"></div>
<div class="a" style="left:1855px;top:317px;width:1px;height:16px;background:#d8dce4"></div>
<div class="t" style="left:589px;top:319px;font-size:12px;color:#000;">状态</div>
<div class="t" style="left:659px;top:319px;font-size:12px;color:#000;">名称</div>
<div class="t" style="left:788px;top:319px;font-size:12px;color:#000;">SN码</div>
<div class="t" style="left:922px;top:319px;font-size:12px;color:#000;">显示器连...</div>
<div class="t" style="left:1022px;top:319px;font-size:12px;color:#000;">飞鼠连接...</div>
<div class="t" style="left:1122px;top:319px;font-size:12px;color:#000;">投屏状态</div>
<div class="t" style="left:1230px;top:319px;font-size:12px;color:#000;">设备分组</div>
<div class="t" style="left:1464px;top:319px;font-size:12px;color:#000;">IP地址</div>
<div class="t" style="left:1613px;top:319px;font-size:12px;color:#000;">MAC地址</div>
<div class="t" style="left:1813px;top:319px;font-size:12px;color:#000;">日志...</div>
<svg style="left:636px;top:319px" width="8" height="13" viewBox="0 0 8 13"><path d="M0.3 5 L4 0.6 L7.7 5 Z M0.3 8 L4 12.4 L7.7 8 Z" fill="#bfc3ca"/></svg>
<svg style="left:765px;top:319px" width="8" height="13" viewBox="0 0 8 13"><path d="M0.3 5 L4 0.6 L7.7 5 Z M0.3 8 L4 12.4 L7.7 8 Z" fill="#bfc3ca"/></svg>
<svg style="left:999px;top:319px" width="8" height="13" viewBox="0 0 8 13"><path d="M0.3 5 L4 0.6 L7.7 5 Z M0.3 8 L4 12.4 L7.7 8 Z" fill="#bfc3ca"/></svg>
<svg style="left:1099px;top:319px" width="8" height="13" viewBox="0 0 8 13"><path d="M0.3 5 L4 0.6 L7.7 5 Z M0.3 8 L4 12.4 L7.7 8 Z" fill="#bfc3ca"/></svg>
<svg style="left:1207px;top:319px" width="8" height="13" viewBox="0 0 8 13"><path d="M0.3 5 L4 0.6 L7.7 5 Z M0.3 8 L4 12.4 L7.7 8 Z" fill="#bfc3ca"/></svg>
<div class="a" style="left:1856px;top:318px;width:20px;height:16px;background:#e9edf6"></div>
<div class="a" style="left:1872px;top:308px;width:1px;height:34px;background:#e8ebf1"></div>
<svg style="left:1862px;top:325px" width="13" height="3" viewBox="0 0 13 3"><circle cx="1.5" cy="1.5" r="1.25" fill="#151515"/><circle cx="6.3" cy="1.5" r="1.25" fill="#151515"/><circle cx="11.1" cy="1.5" r="1.25" fill="#151515"/></svg>
<div class="a" style="left:520px;top:342px;width:1351px;height:32px;background:#fbf8f2"></div>
<div class="t" style="left:1115px;top:352px;font-size:12px;color:#8a5c14;">已勾选本页 2 项</div>
<div class="a" style="left:1207px;top:352px;width:1px;height:11px;background:#d5d9e2"></div>
<div class="t" style="left:1216px;top:352px;font-size:12px;color:#2f63ec;">勾选所有页</div>
<div class="a" style="left:1871px;top:342px;width:7px;height:493px;background:#f1f1f1"></div>
<div class="a" style="left:520px;top:374px;width:1351px;height:40px;background:#f4f9fe;border-bottom:1px solid #e9edf3"></div>
<svg style="left:532px;top:385px" width="14" height="14" viewBox="0 0 14 14"><rect width="14" height="14" rx="2" fill="#2451d6"/><path d="M3 7.2 L5.9 10 L11.2 4" fill="none" stroke="#fff" stroke-width="2"/></svg>
<svg style="left:593px;top:388px" width="12" height="12" viewBox="0 0 12 12"><circle cx="6" cy="6" r="6" fill="#b4bccb"/><path d="M3.8 3.8 L8.2 8.2 M8.2 3.8 L3.8 8.2" stroke="#fff" stroke-width="1.7"/></svg>
<div class="t" style="left:663px;top:388px;font-size:12px;color:#3862ee;">会议主机3</div>
<div class="t" style="left:792px;top:388px;font-size:12px;color:#000;letter-spacing:0.4px">AM008385</div>
<svg style="left:925px;top:388px" width="17" height="13" viewBox="0 0 17 13"><rect x="0.5" y="0.5" width="14" height="9" fill="#e9ecf2" stroke="#c4c8d0" stroke-width="1"/><path d="M7.5 9.5 V11.5 M5 11.8 H10" stroke="#c4c8d0" stroke-width="0.9"/><path d="M11.2 7 L15.6 11.6 M15.6 7 L11.2 11.6" stroke="#e0141e" stroke-width="1.7"/></svg>
<div class="t" style="left:1026px;top:388px;font-size:12px;color:#000;">未连接</div>
<div class="t" style="left:1125px;top:388px;font-size:12px;color:#000;">暂未投屏</div>
<div class="t" style="left:1233px;top:388px;font-size:12px;color:#000;"><span style="padding:0 1px">/</span>阿克苏<span style="padding:0 1px">/</span>南山智园<span style="padding:0 1px">/</span>五楼</div>
<div class="t" style="left:1467px;top:388px;font-size:12px;color:#000;letter-spacing:0.3px">-</div>
<div class="t" style="left:1615px;top:388px;font-size:12px;color:#000;letter-spacing:0.6px">AA-DD-10-00-03-85</div>
<div class="t" style="left:1814px;top:388px;font-size:12px;color:#3862ee;">查看</div>
<div class="a" style="left:520px;top:414px;width:1351px;height:40px;background:#fafafa;border-bottom:1px solid #e9edf3"></div>
<div class="a" style="left:532px;top:425px;width:14px;height:14px;background:#eef2fc;border:1px solid #2f5bd8;border-radius:2px"></div>
<svg style="left:593px;top:427px" width="12" height="12" viewBox="0 0 12 12"><circle cx="6" cy="6" r="6" fill="#b4bccb"/><path d="M3.8 3.8 L8.2 8.2 M8.2 3.8 L3.8 8.2" stroke="#fff" stroke-width="1.7"/></svg>
<div class="t" style="left:663px;top:427px;font-size:12px;color:#3862ee;">不删除的会议主机</div>
<div class="t" style="left:792px;top:427px;font-size:12px;color:#000;letter-spacing:0.4px">AM008384</div>
<svg style="left:925px;top:427px" width="17" height="13" viewBox="0 0 17 13"><rect x="0.5" y="0.5" width="14" height="9" fill="#e9ecf2" stroke="#c4c8d0" stroke-width="1"/><path d="M7.5 9.5 V11.5 M5 11.8 H10" stroke="#c4c8d0" stroke-width="0.9"/><path d="M11.2 7 L15.6 11.6 M15.6 7 L11.2 11.6" stroke="#e0141e" stroke-width="1.7"/></svg>
<div class="t" style="left:1026px;top:427px;font-size:12px;color:#000;">未连接</div>
<div class="t" style="left:1125px;top:427px;font-size:12px;color:#000;">暂未投屏</div>
<div class="t" style="left:1233px;top:427px;font-size:12px;color:#000;"><span style="padding:0 1px">/</span>阿克苏<span style="padding:0 1px">/</span>南山智园<span style="padding:0 1px">/</span>五楼</div>
<div class="t" style="left:1467px;top:427px;font-size:12px;color:#000;letter-spacing:0.3px">-</div>
<div class="t" style="left:1615px;top:427px;font-size:12px;color:#000;letter-spacing:0.6px">AA-DD-10-00-03-84</div>
<div class="t" style="left:1814px;top:427px;font-size:12px;color:#3862ee;">查看</div>
<div class="a" style="left:520px;top:454px;width:1351px;height:39px;background:#f4f9fe;border-bottom:1px solid #e9edf3"></div>
<svg style="left:532px;top:464px" width="14" height="14" viewBox="0 0 14 14"><rect width="14" height="14" rx="2" fill="#2451d6"/><path d="M3 7.2 L5.9 10 L11.2 4" fill="none" stroke="#fff" stroke-width="2"/></svg>
<svg style="left:593px;top:467px" width="12" height="12" viewBox="0 0 12 12"><circle cx="6" cy="6" r="6" fill="#1a8cf2"/><path d="M6 2.6 L9.2 6.2 H7.2 V9.6 H4.8 V6.2 H2.8 Z" fill="#fff"/></svg>
<div class="t" style="left:663px;top:466px;font-size:12px;color:#3862ee;">会议主机1</div>
<div class="t" style="left:792px;top:466px;font-size:12px;color:#000;letter-spacing:0.4px">QPZ-8AC588</div>
<svg style="left:925px;top:467px" width="16" height="13" viewBox="0 0 16 13"><rect x="0.65" y="0.65" width="14.2" height="9.2" rx="1" fill="#fff" stroke="#5b616c" stroke-width="1.3"/><rect x="2" y="2" width="11.5" height="6.5" fill="#52ad2a"/><path d="M7.75 10 V12 M4.5 12.4 H11" stroke="#5b616c" stroke-width="1.1"/></svg>
<div class="t" style="left:1026px;top:466px;font-size:12px;color:#000;">未连接</div>
<div class="t" style="left:1125px;top:466px;font-size:12px;color:#000;">暂未投屏</div>
<div class="t" style="left:1233px;top:466px;font-size:12px;color:#000;"><span style="padding:0 1px">/</span>深圳<span style="padding:0 1px">/</span>南山智园<span style="padding:0 1px">/</span>五楼</div>
<div class="t" style="left:1467px;top:466px;font-size:12px;color:#000;letter-spacing:0.3px">200.200.159.4</div>
<div class="t" style="left:1615px;top:466px;font-size:12px;color:#000;letter-spacing:0.6px">4A-3A-FE-8A-C5-88</div>
<div class="t" style="left:1814px;top:466px;font-size:12px;color:#3862ee;">查看</div>
<div class="a" style="left:522px;top:414px;width:41px;height:37px;border:2px solid #e0161f"></div>
<div class="a" style="left:520px;top:835px;width:1358px;height:1px;background:#dfe3ea"></div>
<div class="t" style="left:1606px;top:854px;font-size:12px;color:#555;">共 3 项</div>
<svg style="left:1665px;top:856px" width="5" height="8" viewBox="0 0 5 8"><path d="M4.2 0.5 L1 4 L4.2 7.5" fill="none" stroke="#b8c0d0" stroke-width="0.9"/></svg>
<svg style="left:1730px;top:856px" width="5" height="8" viewBox="0 0 5 8"><path d="M0.8 0.5 L4 4 L0.8 7.5" fill="none" stroke="#b8c0d0" stroke-width="0.9"/></svg>
<div class="a" style="left:1688px;top:848px;width:24px;height:24px;background:#2566e8;border-radius:12px"></div>
<div class="t" style="left:1696px;top:854px;font-size:12px;color:#fff;">1</div>
<div class="a" style="left:1788px;top:844px;width:60px;height:32px;background:#fff;border:1px solid #dcdfe6;border-radius:2px"></div>
<div class="t" style="left:1802px;top:855px;font-size:12px;color:#222;">20</div>
<svg style="left:1834px;top:857px" width="8" height="5" viewBox="0 0 8 5"><path d="M0 0 H8 L4 5 Z" fill="#a9aeb8"/></svg>
<div class="t" style="left:1760px;top:854px;font-size:12px;color:#555;">每页</div>
<div class="t" style="left:1858px;top:854px;font-size:12px;color:#555;">项</div>
<div class="t" style="left:1631px;top:831px;font-size:20px;color:rgba(0,0,0,0.27);">激活 <span style="font-size:21px">Windows</span></div>
<div class="t" style="left:1631px;top:858px;font-size:15px;color:rgba(0,0,0,0.27);">转到<span style="letter-spacing:0">“</span>&#8202;设置&#8202;”以激活 Windows。</div>
</body></html>
